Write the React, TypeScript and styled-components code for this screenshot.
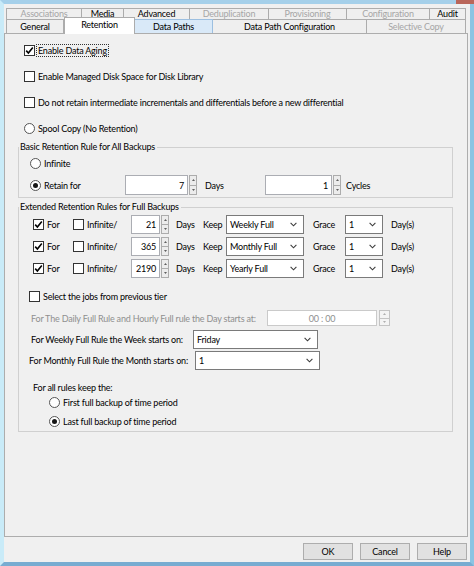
import * as React from 'react'
import styled, { createGlobalStyle } from 'styled-components'

const GlobalStyle = createGlobalStyle`
  html, body {
    margin: 0;
    padding: 0;
    background: #f0f0f0;
  }
  body {
    font-family: Lato, 'Liberation Sans', sans-serif;
    font-size: 9px;
    letter-spacing: -0.2px;
    color: #000;
  }
`

const Window = styled.div`
  position: relative;
  box-sizing: border-box;
  width: 474px;
  height: 566px;
  border-style: solid;
  border-width: 4px;
  border-color: #a5d0ea #8cc4e3 #78acd1 #c9ebf8;
  background: #f0f0f0;
  display: flex;
  flex-direction: column;
`

const CloseCap = styled.div`
  position: absolute;
  top: -4px;
  right: -4px;
  width: 18px;
  height: 4px;
  background: #b9665a;
`

const TabStrip = styled.div`
  margin: 4px 0 0 2px;
  display: flex;
  flex-direction: column;
`

const TabRow = styled.div<{ $h: number }>`
  display: flex;
  height: ${p => p.$h}px;
`

type TabState = 'off' | 'sel' | 'hot' | undefined

const Tab = styled.div<{ $w: number; $h: number; $state?: TabState }>`
  position: relative;
  box-sizing: border-box;
  flex: 0 0 ${p => p.$w}px;
  height: ${p => (p.$state === 'sel' ? p.$h + 3 : p.$h)}px;
  margin-top: ${p => (p.$state === 'sel' ? -2 : 0)}px;
  border: 1px solid ${p => (p.$state === 'hot' ? '#9cbfe0' : '#acacac')};
  border-bottom: none;
  border-left-width: ${p => (p.$state === 'sel' ? 1 : 0)}px;
  &:first-child {
    border-left-width: 1px;
  }
  z-index: ${p => (p.$state === 'sel' ? 1 : 0)};
  line-height: ${p => (p.$state === 'sel' ? p.$h : p.$h - 1)}px;
  text-align: center;
  white-space: nowrap;
  overflow: hidden;
  color: ${p => (p.$state === 'off' ? '#a6a6a6' : '#000')};
  background: ${p =>
    p.$state === 'sel' ? '#ffffff' : p.$state === 'hot' ? '#d9e9f8' : '#efefef'};
`

const Panel = styled.div`
  box-sizing: border-box;
  height: 504px;
  margin-right: 2px;
  border: 1px solid #adadad;
  background: #f0f0f0;
  display: flex;
  flex-direction: column;
`

const Line = styled.div<{ $top: number; $h: number; $pad: number }>`
  display: flex;
  align-items: center;
  flex-shrink: 0;
  height: ${p => p.$h}px;
  margin-top: ${p => p.$top}px;
  padding-left: ${p => p.$pad}px;
  white-space: nowrap;
`

const Cell = styled.div<{ $w: number; $pad?: number }>`
  display: flex;
  align-items: center;
  box-sizing: border-box;
  flex: 0 0 ${p => p.$w}px;
  padding-left: ${p => p.$pad ?? 0}px;
`

const Text = styled.span<{ $dim?: boolean; $gap?: number }>`
  margin-left: ${p => p.$gap ?? 0}px;
  color: ${p => (p.$dim ? '#8f8f8f' : '#000')};
`

const Focus = styled.span`
  margin-left: 2px;
  padding: 0 1px;
  line-height: 11px;
  outline: 1px dotted #333;
`

const Box = styled.span`
  box-sizing: border-box;
  flex: 0 0 11px;
  width: 11px;
  height: 11px;
  border: 1px solid #333;
  background: #fff;
  display: flex;
  align-items: center;
  justify-content: center;
`

const Round = styled(Box)`
  border-color: #555;
  border-radius: 50%;
`

const Dot = styled.span`
  width: 5px;
  height: 5px;
  border-radius: 50%;
  background: #151515;
`

const Check = ({ on }: { on?: boolean }) => (
  <Box>
    {on && (
      <svg width="9" height="9" viewBox="0 0 9 9">
        <path d="M1.2 4.6 L3.4 7 L7.8 1.6" fill="none" stroke="#000" strokeWidth="1.6" />
      </svg>
    )}
  </Box>
)

const Radio = ({ on }: { on?: boolean }) => <Round>{on && <Dot />}</Round>

const Group = styled.fieldset<{ $top: number; $bottom: number }>`
  box-sizing: border-box;
  width: 435px;
  margin: ${p => p.$top}px 0 0 13px;
  padding: 0 0 ${p => p.$bottom}px 0;
  border: 1px solid #d0d0d0;
  min-width: 0;
`

const Legend = styled.legend`
  padding: 0 2px 0 1px;
  line-height: 12px;
`

const Spin = styled.div<{ $w: number; $h: number }>`
  display: flex;
  flex: 0 0 ${p => p.$w}px;
  height: ${p => p.$h}px;
`

const Field = styled.div<{ $dim?: boolean; $center?: boolean }>`
  box-sizing: border-box;
  flex: 1;
  border: 1px solid ${p => (p.$dim ? '#cacaca' : '#abadb3')};
  background: #fff;
  display: flex;
  align-items: center;
  justify-content: ${p => (p.$center ? 'center' : 'flex-end')};
  padding-right: ${p => (p.$center ? 0 : 3)}px;
  color: ${p => (p.$dim ? '#8f8f8f' : '#000')};
`

const Arrows = styled.div<{ $w: number; $gap: number }>`
  display: flex;
  flex-direction: column;
  flex: 0 0 ${p => p.$w}px;
  margin-left: ${p => p.$gap}px;
`

const ArrowBtn = styled.div<{ $dim?: boolean }>`
  box-sizing: border-box;
  flex: 1;
  border: 1px solid ${p => (p.$dim ? '#c4c4c4' : '#acacac')};
  background: ${p => (p.$dim ? '#f4f4f4' : '#ececec')};
  display: flex;
  align-items: center;
  justify-content: center;
  & + & {
    border-top: none;
  }
`

const Tri = ({ up, dim }: { up?: boolean; dim?: boolean }) => (
  <svg width="3" height="2" viewBox="0 0 3 2">
    <path d={up ? 'M0 2 L1.5 0 L3 2 Z' : 'M0 0 L1.5 2 L3 0 Z'} fill={dim ? '#b0b0b0' : '#606060'} />
  </svg>
)

const SpinBox = ({ value, w, h, dim, center, btnW = 8 }: {
  value: string; w: number; h: number; dim?: boolean; center?: boolean; btnW?: number
}) => (
  <Spin $w={w} $h={h}>
    <Field $dim={dim} $center={center}>{value}</Field>
    <Arrows $w={btnW} $gap={dim ? 2 : 1}>
      <ArrowBtn $dim={dim}><Tri up dim={dim} /></ArrowBtn>
      <ArrowBtn $dim={dim}><Tri dim={dim} /></ArrowBtn>
    </Arrows>
  </Spin>
)

const SelectBox = styled.div<{ $w: number; $h: number }>`
  box-sizing: border-box;
  flex: 0 0 ${p => p.$w}px;
  height: ${p => p.$h}px;
  border: 1px solid #7a7a7a;
  background: #fff;
  display: flex;
  align-items: center;
  justify-content: space-between;
  padding: 0 6px 0 3px;
`

const Select = ({ value, w, h = 19 }: { value: string; w: number; h?: number }) => (
  <SelectBox $w={w} $h={h}>
    <span>{value}</span>
    <svg width="7" height="5" viewBox="0 0 7 5">
      <polyline points="0.6,0.8 3.5,3.8 6.4,0.8" fill="none" stroke="#3c3c3c" strokeWidth="1.1" />
    </svg>
  </SelectBox>
)

const ButtonBar = styled.div`
  display: flex;
  justify-content: flex-end;
  gap: 7px;
  padding: 6px 3px 0 0;
`

const Button = styled.div`
  box-sizing: border-box;
  width: 50px;
  height: 17px;
  border: 1px solid #adadad;
  background: #e1e1e1;
  display: flex;
  align-items: center;
  justify-content: center;
`

const topTabs: { label: string; w: number; state?: TabState }[] = [
  { label: 'Associations', w: 76, state: 'off' },
  { label: 'Media', w: 42 },
  { label: 'Advanced', w: 66 },
  { label: 'Deduplication', w: 79, state: 'off' },
  { label: 'Provisioning', w: 78, state: 'off' },
  { label: 'Configuration', w: 83, state: 'off' },
  { label: 'Audit', w: 36 },
]

const bottomTabs: { label: string; w: number; state?: TabState }[] = [
  { label: 'General', w: 58 },
  { label: 'Retention', w: 71, state: 'sel' },
  { label: 'Data Paths', w: 78, state: 'hot' },
  { label: 'Data Path Configuration', w: 154 },
  { label: 'Selective Copy', w: 99, state: 'off' },
]

const rules = [
  { days: '21', keep: 'Weekly Full', top: 1 },
  { days: '365', keep: 'Monthly Full', top: 2 },
  { days: '2190', keep: 'Yearly Full', top: 2 },
]

export default function App() {
  return (
    <>
      <GlobalStyle />
      <Window>
        <CloseCap />
        <TabStrip>
          <TabRow $h={11}>
            {topTabs.map(t => (
              <Tab key={t.label} $w={t.w} $h={11} $state={t.state}>{t.label}</Tab>
            ))}
          </TabRow>
          <TabRow $h={14}>
            {bottomTabs.map(t => (
              <Tab key={t.label} $w={t.w} $h={14} $state={t.state}>{t.label}</Tab>
            ))}
          </TabRow>
        </TabStrip>

        <Panel>
          <Line $top={6} $h={20} $pad={19}>
            <Check on />
            <Focus>Enable Data Aging</Focus>
          </Line>
          <Line $top={6} $h={20} $pad={19}>
            <Check />
            <Text $gap={3}>Enable Managed Disk Space for Disk Library</Text>
          </Line>
          <Line $top={6} $h={20} $pad={19}>
            <Check />
            <Text $gap={3}>Do not retain intermediate incrementals and differentials before a new differential</Text>
          </Line>
          <Line $top={6} $h={20} $pad={19}>
            <Radio />
            <Text $gap={3}>Spool Copy (No Retention)</Text>
          </Line>

          <Group $top={3} $bottom={1}>
            <Legend>Basic Retention Rule for All Backups</Legend>
            <Line $top={2} $h={16} $pad={11}>
              <Radio />
              <Text $gap={3}>Infinite</Text>
            </Line>
            <Line $top={3} $h={22} $pad={11}>
              <Cell $w={95}>
                <Radio on />
                <Text $gap={3}>Retain for</Text>
              </Cell>
              <SpinBox value="7" w={72} h={20} />
              <Cell $w={68} $pad={8}>Days</Cell>
              <SpinBox value="1" w={76} h={20} />
              <Text $gap={5}>Cycles</Text>
            </Line>
          </Group>

          <Group $top={3} $bottom={3}>
            <Legend>Extended Retention Rules for Full Backups</Legend>
            {rules.map(r => (
              <Line key={r.days} $top={r.top} $h={20} $pad={14}>
                <Cell $w={40}>
                  <Check on />
                  <Text $gap={3}>For</Text>
                </Cell>
                <Cell $w={58}>
                  <Check />
                  <Text $gap={3}>Infinite/</Text>
                </Cell>
                <SpinBox value={r.days} w={38} h={19} />
                <Cell $w={34} $pad={7}>Days</Cell>
                <Cell $w={23}>Keep</Cell>
                <Select value={r.keep} w={78} />
                <Cell $w={41} $pad={9}>Grace</Cell>
                <Select value="1" w={38} />
                <Text $gap={8}>Day(s)</Text>
              </Line>
            ))}
            <Line $top={10} $h={16} $pad={10}>
              <Check />
              <Text $gap={3}>Select the jobs from previous tier</Text>
            </Line>
            <Line $top={5} $h={18} $pad={12}>
              <Cell $w={236}>
                <Text $dim>For The Daily Full Rule and Hourly Full rule the Day starts at:</Text>
              </Cell>
              <SpinBox value="00 : 00" w={123} h={16} dim center btnW={11} />
            </Line>
            <Line $top={3} $h={19} $pad={12}>
              <Cell $w={162}>For Weekly Full Rule the Week starts on:</Cell>
              <Select value="Friday" w={125} />
            </Line>
            <Line $top={2} $h={19} $pad={10}>
              <Cell $w={166}>For Monthly Full Rule the Month starts on:</Cell>
              <Select value="1" w={125} />
            </Line>
            <Line $top={10} $h={14} $pad={14}>
              For all rules keep the:
            </Line>
            <Line $top={1} $h={14} $pad={30}>
              <Radio />
              <Text $gap={3}>First full backup of time period</Text>
            </Line>
            <Line $top={5} $h={14} $pad={30}>
              <Radio on />
              <Text $gap={3}>Last full backup of time period</Text>
            </Line>
          </Group>
        </Panel>

        <ButtonBar>
          <Button>OK</Button>
          <Button>Cancel</Button>
          <Button>Help</Button>
        </ButtonBar>
      </Window>
    </>
  )
}
